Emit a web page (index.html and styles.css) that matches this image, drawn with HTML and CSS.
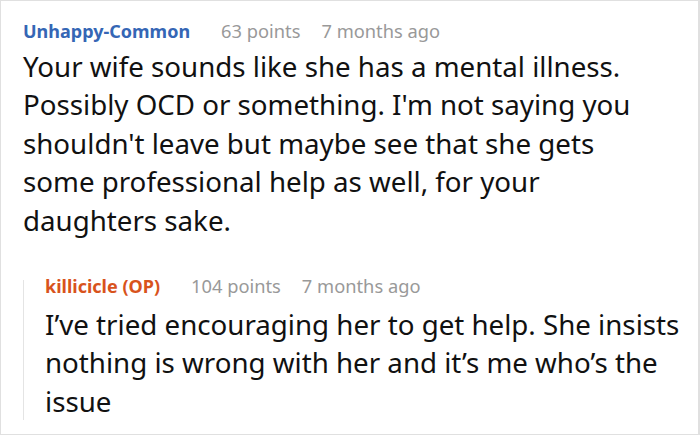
FILE: index.html
```html
<!DOCTYPE html>
<html>
<head>
<meta charset="utf-8">
<link rel="stylesheet" href="styles.css">
</head>
<body>
<div class="card">
  <div class="comment">
    <div class="meta">
      <span class="user">Unhappy-Common</span>
      <span class="info">63 points</span>
      <span class="info">7 months ago</span>
    </div>
    <div class="body">Your wife sounds like she has a mental illness.<br>Possibly OCD or something. I'm not saying you<br>shouldn't leave but maybe see that she gets<br>some professional help as well, for your<br>daughters sake.</div>
    <div class="reply">
      <div class="meta">
        <span class="user op">killicicle (OP)</span>
        <span class="info">104 points</span>
        <span class="info">7 months ago</span>
      </div>
      <div class="body">I’ve tried encouraging her to get help. She insists<br>nothing is wrong with her and it’s me who’s the<br>issue</div>
    </div>
  </div>
</div>
</body>
</html>
```

FILE: styles.css
```css
html, body { margin: 0; padding: 0; background: #fff; }
.card {
  width: 700px;
  height: 435px;
  box-sizing: border-box;
  border: 1px solid #e0e0e0;
  border-right-width: 2px;
  padding: 12px 0 0 22px;
  font-family: "Noto Sans", sans-serif;
}
.meta {
  display: flex;
  gap: 21px;
  font-size: 18.3px;
  line-height: 36px;
  align-items: center;
}
.user { font-weight: 700; color: #3566b5; font-size: 18px; margin-right: 10px; }
.user.op { color: #d8531c; }
.info { color: #999; }
.body {
  font-size: 27.7px;
  line-height: 38.4px;
  color: #111;
  margin-top: -2px;
}
.reply {
  margin-top: 41px;
  border-left: 1px solid #e4e4e4;
  padding-left: 21px;
}
.reply .meta { line-height: 12px; }
.reply .body { margin-top: 13px; }
```
